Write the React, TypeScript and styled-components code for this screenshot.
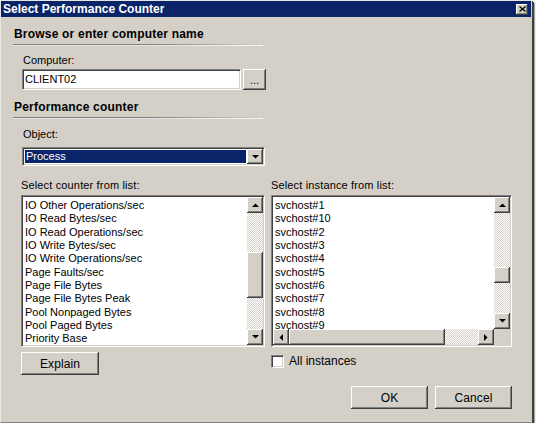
import React from 'react';
import styled, { createGlobalStyle, css } from 'styled-components';

const GlobalStyle = createGlobalStyle`
	body {
		margin: 0;
		background: #ffffff;
		font-family: 'Liberation Sans', Arial, sans-serif;
		font-size: 11px;
		color: #000;
	}
`;

const raised = css`
	background: #d4d0c8;
	box-shadow:
		inset -1px -1px #404040,
		inset 1px 1px #ffffff,
		inset -2px -2px #808080,
		inset 2px 2px #d4d0c8;
`;

const sunken = css`
	border: 1px solid;
	border-color: #808080 #ffffff #ffffff #808080;
	box-shadow:
		inset 1px 1px #404040,
		inset -1px -1px #d4d0c8;
	padding: 1px;
	box-sizing: border-box;
`;

const dither = css`
	background: repeating-conic-gradient(#d4d0c8 0 25%, #ffffff 0 50%) 0 0 / 2px 2px;
`;

const counters = [
	'IO Other Operations/sec',
	'IO Read Bytes/sec',
	'IO Read Operations/sec',
	'IO Write Bytes/sec',
	'IO Write Operations/sec',
	'Page Faults/sec',
	'Page File Bytes',
	'Page File Bytes Peak',
	'Pool Nonpaged Bytes',
	'Pool Paged Bytes',
	'Priority Base',
];

const instances = [
	'svchost#1',
	'svchost#10',
	'svchost#2',
	'svchost#3',
	'svchost#4',
	'svchost#5',
	'svchost#6',
	'svchost#7',
	'svchost#8',
	'svchost#9',
];

type Dir = 'up' | 'down' | 'left' | 'right';

const arrowPoints: Record<Dir, string> = {
	up: '0,4 7,4 3.5,0.5',
	down: '0,0 7,0 3.5,3.5',
	left: '4,0 4,7 0.5,3.5',
	right: '0,0 0,7 3.5,3.5',
};

const Arrow = ({ dir }: { dir: Dir }) => {
	const wide = dir === 'up' || dir === 'down';
	return (
		<svg width={wide ? 7 : 4} height={wide ? 4 : 7} viewBox={wide ? '0 0 7 4' : '0 0 4 7'}>
			<polygon points={arrowPoints[dir]} fill="#000" />
		</svg>
	);
};

export default function App() {
	return (
		<>
			<GlobalStyle />
			<Window>
				<TitleBar>
					<TitleText>Select Performance Counter</TitleText>
					<CloseButton>
						<svg width="7" height="6" viewBox="0 0 7 6">
							<path d="M0.5 0.5 L6.5 5.5 M6.5 0.5 L0.5 5.5" stroke="#000" strokeWidth="1.3" />
						</svg>
					</CloseButton>
				</TitleBar>
				<Body>
					<SectionHeading $top={11}>Browse or enter computer name</SectionHeading>
					<Rule />
					<Group>
						<FieldLabel $top={8}>Computer:</FieldLabel>
						<InputRow>
							<TextField>CLIENT02</TextField>
							<BrowseButton>...</BrowseButton>
						</InputRow>
					</Group>

					<SectionHeading $top={11}>Performance counter</SectionHeading>
					<Rule />
					<Group>
						<FieldLabel $top={9}>Object:</FieldLabel>
						<ComboBox>
							<ComboValue>Process</ComboValue>
							<DropButton>
								<Arrow dir="down" />
							</DropButton>
						</ComboBox>
					</Group>

					<Columns>
						<Column>
							<ColumnLabel>Select counter from list:</ColumnLabel>
							<ListBox>
								<ListArea>
									<Items>
										{counters.map((c) => (
											<Item key={c}>{c}</Item>
										))}
									</Items>
									<VScroll>
										<ScrollBtn>
											<Arrow dir="up" />
										</ScrollBtn>
										<VTrack>
											<Gap $size={39} />
											<Thumb $size={46} />
										</VTrack>
										<ScrollBtn>
											<Arrow dir="down" />
										</ScrollBtn>
									</VScroll>
								</ListArea>
							</ListBox>
							<PushButton $width={78} $top={5}>
								Explain
							</PushButton>
						</Column>

						<Column>
							<ColumnLabel>Select instance from list:</ColumnLabel>
							<ListBox>
								<ListArea>
									<Items>
										{instances.map((c) => (
											<Item key={c}>{c}</Item>
										))}
									</Items>
									<VScroll>
										<ScrollBtn>
											<Arrow dir="up" />
										</ScrollBtn>
										<VTrack>
											<Gap $size={54} />
											<Thumb $size={16} />
										</VTrack>
										<ScrollBtn>
											<Arrow dir="down" />
										</ScrollBtn>
									</VScroll>
								</ListArea>
								<HScrollRow>
									<HScroll>
										<ScrollBtn>
											<Arrow dir="left" />
										</ScrollBtn>
										<HTrack>
											<Thumb $size={156} $horizontal />
										</HTrack>
										<ScrollBtn>
											<Arrow dir="right" />
										</ScrollBtn>
									</HScroll>
									<Corner />
								</HScrollRow>
							</ListBox>
							<CheckRow>
								<CheckBox />
								<span>All instances</span>
							</CheckRow>
						</Column>
					</Columns>

					<Footer>
						<PushButton $width={77}>OK</PushButton>
						<PushButton $width={77}>Cancel</PushButton>
					</Footer>
				</Body>
			</Window>
		</>
	);
}

const Window = styled.div`
	width: 532px;
	height: 423px;
	box-sizing: border-box;
	background: #d4d0c8;
	border: 1px solid;
	border-color: #e8e6e0 #d4d0c8 #808080 #e8e6e0;
	box-shadow:
		1px 1px 0 #404040,
		2px 2px 0 #404040,
		3px 3px 1px rgba(0, 0, 0, 0.35);
	display: flex;
	flex-direction: column;
`;

const TitleBar = styled.div`
	height: 16px;
	background: #0a246a;
	display: flex;
	align-items: center;
	justify-content: space-between;
	padding: 0 2px 0 2px;
`;

const TitleText = styled.span`
	color: #fff;
	font-weight: bold;
	font-size: 12px;
	line-height: 16px;
`;

const CloseButton = styled.div`
	${raised};
	width: 12px;
	height: 11px;
	margin-right: 1px;
	display: flex;
	align-items: center;
	justify-content: center;
`;

const Body = styled.div`
	padding: 0 19px 0 12px;
	display: flex;
	flex-direction: column;
`;

const SectionHeading = styled.div<{ $top: number }>`
	margin-top: ${(p) => p.$top}px;
	font-weight: bold;
	font-size: 12px;
	letter-spacing: 0.2px;
	line-height: 13px;
	padding-left: 1px;
`;

const Rule = styled.div`
	margin-top: 3px;
	height: 1px;
	width: 250px;
	background: linear-gradient(to right, #808080 0%, #808080 55%, rgba(128, 128, 128, 0) 100%);
	border-bottom: 1px solid rgba(255, 255, 255, 0.8);
`;

const Group = styled.div`
	padding-left: 9px;
	display: flex;
	flex-direction: column;
`;

const FieldLabel = styled.div<{ $top: number }>`
	margin-top: ${(p) => p.$top}px;
	line-height: 13px;
	padding-left: 1px;
`;

const InputRow = styled.div`
	margin-top: 2px;
	display: flex;
	gap: 2px;
`;

const TextField = styled.div`
	${sunken};
	width: 219px;
	height: 21px;
	background: #fff;
	line-height: 17px;
	padding-left: 2px;
`;

const BrowseButton = styled.div`
	${raised};
	width: 23px;
	height: 21px;
	display: flex;
	align-items: center;
	justify-content: center;
	line-height: 13px;
	padding-top: 1px;
	box-sizing: border-box;
`;

const ComboBox = styled.div`
	${sunken};
	margin-top: 6px;
	width: 243px;
	height: 19px;
	background: #fff;
	display: flex;
`;

const ComboValue = styled.div`
	flex: 1;
	margin: 1px;
	background: #0a246a;
	color: #fff;
	line-height: 13px;
	padding-left: 1px;
`;

const DropButton = styled.div`
	${raised};
	width: 16px;
	display: flex;
	align-items: center;
	justify-content: center;
`;

const Columns = styled.div`
	margin-top: 13px;
	margin-left: 8px;
	display: grid;
	grid-template-columns: 244px 241px;
	column-gap: 6px;
`;

const Column = styled.div`
	display: flex;
	flex-direction: column;
`;

const ColumnLabel = styled.div`
	line-height: 13px;
	letter-spacing: 0.15px;
`;

const ListBox = styled.div`
	${sunken};
	margin-top: 3px;
	height: 152px;
	background: #fff;
	display: flex;
	flex-direction: column;
`;

const ListArea = styled.div`
	flex: 1;
	min-height: 0;
	display: flex;
`;

const Items = styled.div`
	flex: 1;
	overflow: hidden;
	padding: 2px 2px 0 2px;
`;

const Item = styled.div`
	line-height: 13.33px;
	white-space: nowrap;
`;

const VScroll = styled.div`
	width: 16px;
	display: flex;
	flex-direction: column;
`;

const ScrollBtn = styled.div`
	${raised};
	width: 16px;
	height: 16px;
	flex: none;
	display: flex;
	align-items: center;
	justify-content: center;
`;

const VTrack = styled.div`
	${dither};
	flex: 1;
	display: flex;
	flex-direction: column;
`;

const HTrack = styled.div`
	${dither};
	flex: 1;
	display: flex;
`;

const Gap = styled.div<{ $size: number }>`
	height: ${(p) => p.$size}px;
	flex: none;
`;

const Thumb = styled.div<{ $size: number; $horizontal?: boolean }>`
	${raised};
	flex: none;
	${(p) => (p.$horizontal ? `width: ${p.$size}px;` : `height: ${p.$size}px;`)}
`;

const HScrollRow = styled.div`
	display: flex;
	height: 16px;
`;

const HScroll = styled.div`
	flex: 1;
	display: flex;
`;

const Corner = styled.div`
	width: 16px;
	background: #d4d0c8;
`;

const PushButton = styled.div<{ $width: number; $top?: number }>`
	${raised};
	width: ${(p) => p.$width}px;
	height: 23px;
	margin-top: ${(p) => p.$top ?? 0}px;
	display: flex;
	align-items: center;
	justify-content: center;
	font-size: 12px;
	letter-spacing: 0.1px;
`;

const CheckRow = styled.div`
	margin-top: 8px;
	display: flex;
	align-items: center;
	gap: 5px;
	line-height: 13px;
	font-size: 12px;
`;

const CheckBox = styled.div`
	${sunken};
	width: 13px;
	height: 13px;
	background: #fff;
`;

const Footer = styled.div`
	margin-top: 11px;
	display: flex;
	justify-content: flex-end;
	gap: 7px;
`;
